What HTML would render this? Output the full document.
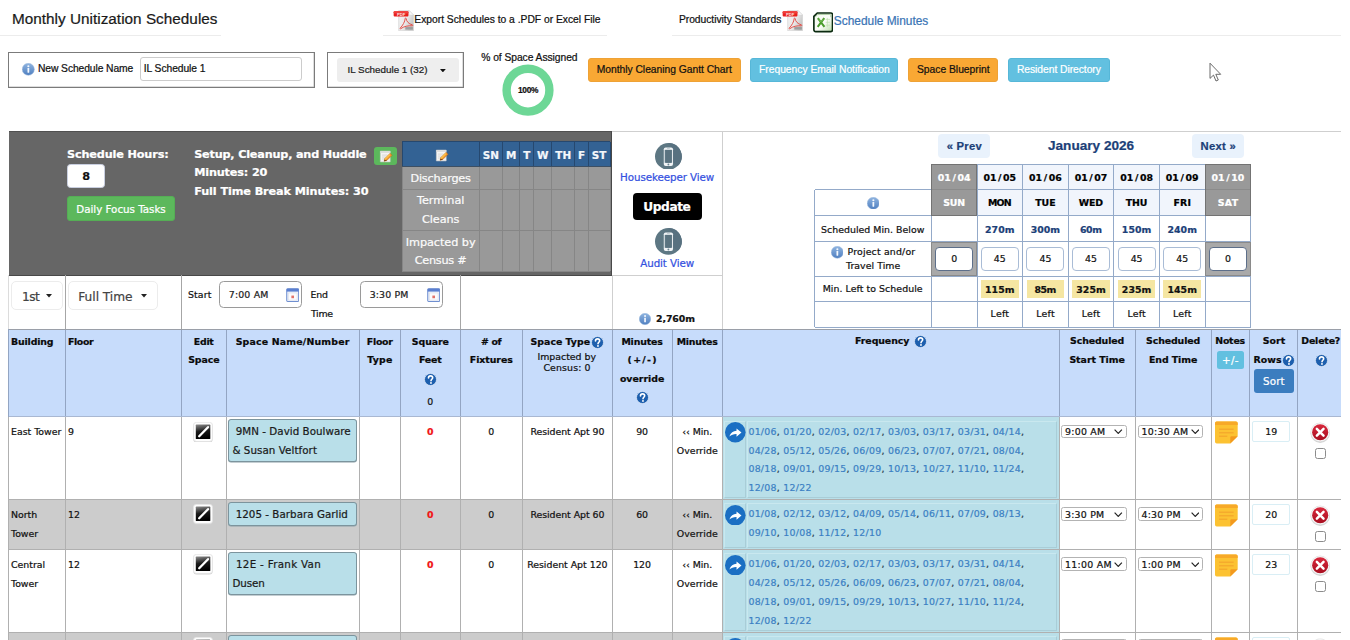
<!DOCTYPE html>
<html lang="en">
<head>
<meta charset="utf-8">
<title>Monthly Unitization Schedules</title>
<style>
html,body{margin:0;padding:0;background:#fff;}
body{width:1350px;height:640px;overflow:hidden;position:relative;font-family:"DejaVu Sans",sans-serif;color:#000;}
div,span.t,svg.a{position:absolute;box-sizing:border-box;}
span.t{white-space:pre;-webkit-text-stroke:0.22px currentColor;}
span.t b{font-weight:400;color:#3b7fc4;}
span.t i{font-style:normal;}
</style>
</head>
<body>
<div style="left:0px;top:35px;width:221px;height:1px;background:#ececec"></div>
<div style="left:383px;top:35px;width:223.5px;height:1px;background:#ececec"></div>
<div style="left:672px;top:35px;width:669px;height:1px;background:#ececec"></div>
<span class="t" style="left:12px;top:10.56px;font-size:15.3px;line-height:15.3px;font-family:'Liberation Sans', sans-serif;color:#1a1a1a;letter-spacing:0.02px;">Monthly Unitization Schedules</span>
<svg class="a" style="left:392.5px;top:10.3px" width="21.5" height="21.2" viewBox="0 0 21.5 21.5"><defs><linearGradient id="pg" x1="0" y1="0" x2="1" y2="0.600"><stop offset="0" stop-color="#f4f4f4"/><stop offset="0.600" stop-color="#e9e9e9"/><stop offset="1" stop-color="#c4c4c4"/></linearGradient></defs><path d="M5.600 0.400h10.400l4.700 4.700v15.900h-15.100z" fill="url(#pg)" stroke="#d0d0d0" stroke-width="0.600"/><path d="M16 0.400v4.700h4.700z" fill="#fafafa" stroke="#cfcfcf" stroke-width="0.400"/><rect x="12.300" y="17.300" width="7.700" height="2.600" fill="#9d9d9d"/><path d="M7.200 18.300C9.700 15.800 12 11.800 12.200 8.700c0-.800 1-.800 1 0C13.300 11.400 16 14.300 19.400 15c.800.200.700 1-.100 1C15.600 15.700 10.400 16.700 7.900 18.900c-.600.500-1.200 0-.700-.600z" fill="none" stroke="#e4514b" stroke-width="1" stroke-linejoin="round"/><rect x="0.500" y="1.300" width="15" height="5.300" rx="0.900" fill="#e8201c"/><rect x="0.500" y="1.300" width="15" height="2.200" rx="0.900" fill="#f0413c"/><text x="8" y="5.600" font-family="Liberation Sans, sans-serif" font-size="4.200" font-weight="700" fill="#fbe3e2" text-anchor="middle">PDF</text></svg>
<span class="t" style="left:414.3px;top:14.99px;font-size:10.3px;line-height:10.3px;font-family:'Liberation Sans', sans-serif;color:#111;letter-spacing:-0.01px;">Export Schedules to a .PDF or Excel File</span>
<span class="t" style="left:678.9px;top:15.39px;font-size:10.3px;line-height:10.3px;font-family:'Liberation Sans', sans-serif;color:#111;letter-spacing:-0.03px;">Productivity Standards</span>
<svg class="a" style="left:781.5px;top:10.3px" width="21.5" height="21.2" viewBox="0 0 21.5 21.5"><defs><linearGradient id="pg" x1="0" y1="0" x2="1" y2="0.600"><stop offset="0" stop-color="#f4f4f4"/><stop offset="0.600" stop-color="#e9e9e9"/><stop offset="1" stop-color="#c4c4c4"/></linearGradient></defs><path d="M5.600 0.400h10.400l4.700 4.700v15.900h-15.100z" fill="url(#pg)" stroke="#d0d0d0" stroke-width="0.600"/><path d="M16 0.400v4.700h4.700z" fill="#fafafa" stroke="#cfcfcf" stroke-width="0.400"/><rect x="12.300" y="17.300" width="7.700" height="2.600" fill="#9d9d9d"/><path d="M7.200 18.300C9.700 15.800 12 11.800 12.200 8.700c0-.800 1-.800 1 0C13.300 11.400 16 14.300 19.400 15c.800.200.700 1-.100 1C15.600 15.700 10.400 16.700 7.900 18.900c-.600.500-1.200 0-.700-.600z" fill="none" stroke="#e4514b" stroke-width="1" stroke-linejoin="round"/><rect x="0.500" y="1.300" width="15" height="5.300" rx="0.900" fill="#e8201c"/><rect x="0.500" y="1.300" width="15" height="2.200" rx="0.900" fill="#f0413c"/><text x="8" y="5.600" font-family="Liberation Sans, sans-serif" font-size="4.200" font-weight="700" fill="#fbe3e2" text-anchor="middle">PDF</text></svg>
<svg class="a" style="left:812.8px;top:12px" width="20.4" height="20.6" viewBox="0 0 21 21"><defs><linearGradient id="xg" x1="0" y1="0" x2="1" y2="1"><stop offset="0" stop-color="#f4faef"/><stop offset="0.550" stop-color="#fbfdf9"/><stop offset="1" stop-color="#b9dba8"/></linearGradient></defs><path d="M4.400 0.900h13.900a1.800 1.800 0 0 1 1.800 1.800v15.600a1.800 1.800 0 0 1-1.800 1.800h-15.600a1.800 1.800 0 0 1-1.800-1.800v-13.900z" fill="url(#xg)" stroke="#0b2a10" stroke-width="1.700" stroke-linejoin="round"/><path d="M2.400 4.900l2.500-2.500h12.500a.900.900 0 0 1 .900.900v2" fill="none" stroke="#5e9a4c" stroke-width="0.700" opacity="0.700"/><path d="M13 7.500h4.500M13 10.500h4.500M13 13.500h4.500M14.800 6v9.500" stroke="#bfe0b0" stroke-width="0.700"/><path d="M5 6.300l6.800 8.900M11.600 6.300L4.800 15.200" stroke="#4a9c2c" stroke-width="2.100" fill="none"/><path d="M5.600 6.700l2.900 3.800M11 6.700l-2.300 3" stroke="#7fc45a" stroke-width="0.800" fill="none"/></svg>
<span class="t" style="left:833.8px;top:15.63px;font-size:11.9px;line-height:11.9px;font-family:'Liberation Sans', sans-serif;color:#3a74b5;">Schedule Minutes</span>
<div style="left:8px;top:51.6px;width:307.3px;height:36px;border:1px solid #7b7b7b;box-shadow:inset -0.5px -0.5px 0 #bbb"></div>
<svg class="a" style="left:22px;top:63.4px" width="12.6" height="12.6" viewBox="0 0 20 20"><defs><linearGradient id="ig" x1="0" y1="0" x2="0" y2="1"><stop offset="0" stop-color="#8fb4e0"/><stop offset="1" stop-color="#4f7fc0"/></linearGradient></defs><circle cx="10" cy="10" r="9.6" fill="url(#ig)" stroke="#9db9dd" stroke-width="0.8"/><rect x="8.7" y="8" width="2.8" height="7.4" rx="0.6" fill="#f4f8fd"/><circle cx="10.1" cy="5.2" r="1.7" fill="#f4f8fd"/></svg>
<span class="t" style="left:38px;top:63.89px;font-size:10.3px;line-height:10.3px;font-family:'Liberation Sans', sans-serif;color:#111;letter-spacing:-0.09px;">New Schedule Name</span>
<div style="left:139.7px;top:57px;width:162.1px;height:24.3px;border:1px solid #ccc;border-radius:3px;background:#fff"></div>
<span class="t" style="left:143.8px;top:64.09px;font-size:10.3px;line-height:10.3px;font-family:'Liberation Sans', sans-serif;color:#111;letter-spacing:-0.08px;">IL Schedule 1</span>
<div style="left:327.3px;top:52.3px;width:136.5px;height:35.3px;border:1px solid #7b7b7b;box-shadow:inset -0.5px -0.5px 0 #bbb"></div>
<div style="left:337px;top:57.5px;width:122px;height:24.5px;background:#eeeeee;border-radius:3px"></div>
<span class="t" style="left:347.5px;top:64.97px;font-size:9.85px;line-height:9.85px;font-family:'Liberation Sans', sans-serif;color:#222;">IL Schedule 1 (32)</span>
<svg class="a" style="left:439.8px;top:68.8px" width="5.8" height="3.4" viewBox="0 0 8 4.6"><path d="M0 0h8L4 4.600z" fill="#111"/></svg>
<span class="t" style="left:481.3px;top:52.59px;font-size:10.3px;line-height:10.3px;font-family:'Liberation Sans', sans-serif;color:#111;letter-spacing:-0.06px;">% of Space Assigned</span>
<svg class="a" style="left:500px;top:62px" width="56" height="56" viewBox="0 0 56 56"><circle cx="28" cy="28.2" r="21.400" fill="none" stroke="#6dd796" stroke-width="8.400"/></svg>
<span class="t" style="left:517.95px;top:86.09px;font-size:8.4px;line-height:8.4px;font-family:'Liberation Sans', sans-serif;font-weight:700;color:#111;letter-spacing:-0.31px;">100%</span>
<div style="left:587.5px;top:58px;width:153.1px;height:24.2px;background:#f9a834;border:1px solid #eea236;border-radius:3px"></div>
<span class="t" style="left:596.7px;top:64.99px;font-size:10.3px;line-height:10.3px;font-family:'Liberation Sans', sans-serif;color:#111;letter-spacing:-0.02px;">Monthly Cleaning Gantt Chart</span>
<div style="left:750px;top:58px;width:148px;height:24.2px;background:#62c0e0;border:1px solid #56b7d8;border-radius:3px"></div>
<span class="t" style="left:759px;top:64.99px;font-size:10.3px;line-height:10.3px;font-family:'Liberation Sans', sans-serif;color:#fff;letter-spacing:-0.01px;">Frequency Email Notification</span>
<div style="left:908px;top:58px;width:89.5px;height:24.2px;background:#f9a834;border:1px solid #eea236;border-radius:3px"></div>
<span class="t" style="left:917px;top:64.99px;font-size:10.3px;line-height:10.3px;font-family:'Liberation Sans', sans-serif;color:#111;letter-spacing:-0.01px;">Space Blueprint</span>
<div style="left:1007.8px;top:57.6px;width:101.9px;height:24.8px;background:#62c0e0;border:1px solid #56b7d8;border-radius:3px"></div>
<span class="t" style="left:1016.9px;top:64.89px;font-size:10.3px;line-height:10.3px;font-family:'Liberation Sans', sans-serif;color:#fff;letter-spacing:-0.04px;">Resident Directory</span>
<svg class="a" style="left:1207.5px;top:61.6px" width="15" height="21" viewBox="0 0 15 21"><path d="M2 1.200v15.200l3.500-3.300 2.500 5.900 2.300-1-2.500-5.700h4.900z" fill="#fff" stroke="#5a5a5a" stroke-width="0.9" stroke-linejoin="round"/></svg>
<div style="left:8.7px;top:131.3px;width:603.3px;height:144.4px;background:#666;border-top:1.500px solid #505050;border-bottom:1.500px solid #484848;border-right:1.500px solid #484848"></div>
<span class="t" style="left:67px;top:149.18px;font-size:11.25px;line-height:11.25px;font-weight:700;color:#fff;letter-spacing:-0.15px;">Schedule Hours:</span>
<div style="left:67px;top:164.2px;width:38.3px;height:24.1px;background:#fff;border:1px solid #c9cfe0;border-radius:3.500px"></div>
<span class="t" style="left:82.19px;top:170.78px;font-size:11.25px;line-height:11.25px;font-weight:700;color:#111;">8</span>
<div style="left:67px;top:196.3px;width:108px;height:24.5px;background:#5cb85c;border:1px solid #55ae55;border-radius:3px"></div>
<span class="t" style="left:76.3px;top:203.59px;font-size:10.3px;line-height:10.3px;color:#fff;letter-spacing:-0.01px;">Daily Focus Tasks</span>
<span class="t" style="left:194.2px;top:149.18px;font-size:11.25px;line-height:11.25px;font-weight:700;color:#fff;letter-spacing:-0.2px;">Setup, Cleanup, and Huddle</span>
<span class="t" style="left:194.2px;top:167.48px;font-size:11.25px;line-height:11.25px;font-weight:700;color:#fff;letter-spacing:-0.16px;">Minutes: 20</span>
<span class="t" style="left:194.2px;top:185.78px;font-size:11.25px;line-height:11.25px;font-weight:700;color:#fff;letter-spacing:-0.11px;">Full Time Break Minutes: 30</span>
<div style="left:373.7px;top:146.7px;width:23.3px;height:18.3px;background:#5cb85c;border-radius:3px"></div>
<svg class="a" style="left:378.3px;top:148.6px" width="15" height="15" viewBox="0 0 16 16"><path d="M2.500 2.200h10.500v11.600h-10.500z" fill="#f4f4f4" stroke="#c9c9c9" stroke-width="0.6"/><path d="M2.500 2.200h10.500v2h-10.500z" fill="#dcdcdc"/><path d="M4.200 6.500h6M4.200 8.600h4.500M4.200 10.700h3" stroke="#cfcfcf" stroke-width="0.8"/><path d="M12.900 4.600l2.100 2.100-5.600 5.600-2.900.8.800-2.900z" fill="#f0932b" stroke="#b8651a" stroke-width="0.5"/><path d="M6.500 13.100l.8-2.900 2.100 2.100z" fill="#6b3410"/><path d="M12.200 5.300l1.100 1.100-5.600 5.600-1.100-1.100z" fill="#fbc04a"/></svg>
<div style="left:402.2px;top:141.7px;width:207.8px;height:25px;background:#336294"></div>
<div style="left:402.2px;top:166.7px;width:207.8px;height:104.7px;background:#999"></div>
<div style="left:401.7px;top:141.7px;width:1px;height:25px;background:#26486f"></div>
<div style="left:401.7px;top:166.7px;width:1px;height:104.7px;background:#868686"></div>
<div style="left:478.7px;top:141.7px;width:1px;height:25px;background:#26486f"></div>
<div style="left:478.7px;top:166.7px;width:1px;height:104.7px;background:#868686"></div>
<div style="left:502px;top:141.7px;width:1px;height:25px;background:#26486f"></div>
<div style="left:502px;top:166.7px;width:1px;height:104.7px;background:#868686"></div>
<div style="left:519.2px;top:141.7px;width:1px;height:25px;background:#26486f"></div>
<div style="left:519.2px;top:166.7px;width:1px;height:104.7px;background:#868686"></div>
<div style="left:533.2px;top:141.7px;width:1px;height:25px;background:#26486f"></div>
<div style="left:533.2px;top:166.7px;width:1px;height:104.7px;background:#868686"></div>
<div style="left:551.2px;top:141.7px;width:1px;height:25px;background:#26486f"></div>
<div style="left:551.2px;top:166.7px;width:1px;height:104.7px;background:#868686"></div>
<div style="left:574.2px;top:141.7px;width:1px;height:25px;background:#26486f"></div>
<div style="left:574.2px;top:166.7px;width:1px;height:104.7px;background:#868686"></div>
<div style="left:587.8px;top:141.7px;width:1px;height:25px;background:#26486f"></div>
<div style="left:587.8px;top:166.7px;width:1px;height:104.7px;background:#868686"></div>
<div style="left:609.5px;top:141.7px;width:1px;height:25px;background:#26486f"></div>
<div style="left:609.5px;top:166.7px;width:1px;height:104.7px;background:#868686"></div>
<div style="left:402.2px;top:141.2px;width:207.8px;height:1px;background:#26486f"></div>
<div style="left:402.2px;top:166.2px;width:207.8px;height:1px;background:#3d4f63"></div>
<div style="left:402.2px;top:189.2px;width:207.8px;height:1px;background:#868686"></div>
<div style="left:402.2px;top:229.5px;width:207.8px;height:1px;background:#868686"></div>
<div style="left:402.2px;top:270.9px;width:207.8px;height:1px;background:#868686"></div>
<svg class="a" style="left:433.5px;top:148px" width="15" height="15" viewBox="0 0 16 16"><path d="M2.500 2.200h10.500v11.600h-10.500z" fill="#f4f4f4" stroke="#c9c9c9" stroke-width="0.6"/><path d="M2.500 2.200h10.500v2h-10.500z" fill="#dcdcdc"/><path d="M4.200 6.500h6M4.200 8.600h4.500M4.200 10.700h3" stroke="#cfcfcf" stroke-width="0.8"/><path d="M12.900 4.600l2.100 2.100-5.600 5.600-2.900.8.800-2.900z" fill="#f0932b" stroke="#b8651a" stroke-width="0.5"/><path d="M6.500 13.100l.8-2.900 2.100 2.100z" fill="#6b3410"/><path d="M12.200 5.300l1.100 1.100-5.600 5.600-1.100-1.100z" fill="#fbc04a"/></svg>
<span class="t" style="left:482.76px;top:150.2px;font-size:10.4px;line-height:10.4px;font-weight:700;color:#f4f7fb;">SN</span>
<span class="t" style="left:505.93px;top:150.2px;font-size:10.4px;line-height:10.4px;font-weight:700;color:#f4f7fb;">M</span>
<span class="t" style="left:523.15px;top:150.2px;font-size:10.4px;line-height:10.4px;font-weight:700;color:#f4f7fb;">T</span>
<span class="t" style="left:536.97px;top:150.2px;font-size:10.4px;line-height:10.4px;font-weight:700;color:#f4f7fb;">W</span>
<span class="t" style="left:555.3px;top:150.2px;font-size:10.4px;line-height:10.4px;font-weight:700;color:#f4f7fb;">TH</span>
<span class="t" style="left:577.95px;top:150.2px;font-size:10.4px;line-height:10.4px;font-weight:700;color:#f4f7fb;">F</span>
<span class="t" style="left:591.86px;top:150.2px;font-size:10.4px;line-height:10.4px;font-weight:700;color:#f4f7fb;">ST</span>
<span class="t" style="left:410.45px;top:173.28px;font-size:11.25px;line-height:11.25px;color:#fbfbfb;letter-spacing:-0.19px;">Discharges</span>
<span class="t" style="left:416.95px;top:195.48px;font-size:11.25px;line-height:11.25px;color:#fbfbfb;letter-spacing:-0.01px;">Terminal</span>
<span class="t" style="left:422.05px;top:214.18px;font-size:11.25px;line-height:11.25px;color:#fbfbfb;letter-spacing:-0.1px;">Cleans</span>
<span class="t" style="left:405.7px;top:236.68px;font-size:11.25px;line-height:11.25px;color:#fbfbfb;letter-spacing:-0.04px;">Impacted by</span>
<span class="t" style="left:414.7px;top:255.48px;font-size:11.25px;line-height:11.25px;color:#fbfbfb;letter-spacing:-0.25px;">Census #</span>
<div style="left:611.5px;top:131px;width:729.5px;height:1px;background:#cfcfcf"></div>
<div style="left:721.8px;top:131px;width:1px;height:198px;background:#cfcfcf"></div>
<div style="left:611.5px;top:275.2px;width:111.3px;height:1px;background:#cfcfcf"></div>
<div style="left:611.5px;top:275.2px;width:1px;height:53.8px;background:#cfcfcf"></div>
<svg class="a" style="left:654.9px;top:142.7px" width="26.8" height="26.8" viewBox="0 0 40 40"><circle cx="20" cy="20" r="20" fill="#5d7783"/><path d="M20 0a20 20 0 0 1 14.100 34.100L26 28V8z" fill="#587180"/><rect x="13.100" y="6.700" width="13.800" height="27.600" rx="2.800" fill="#f1f4f6"/><rect x="14.500" y="10.300" width="11" height="19.200" fill="#657f8b"/><rect x="15.600" y="10.300" width="8.800" height="19.200" fill="#5a7380"/><circle cx="20" cy="32" r="1.400" fill="#6b8591"/><rect x="17.800" y="8.100" width="4.400" height="0.900" rx="0.400" fill="#9fb2bb"/></svg>
<span class="t" style="left:620.1px;top:171.79px;font-size:10.3px;line-height:10.3px;color:#3350e0;letter-spacing:-0.08px;">Housekeeper View</span>
<div style="left:633px;top:192.5px;width:68.7px;height:27.5px;background:#000;border-radius:4px"></div>
<span class="t" style="left:643.35px;top:201.08px;font-size:12.2px;line-height:12.2px;font-weight:700;color:#fff;letter-spacing:-0.43px;">Update</span>
<svg class="a" style="left:655.3px;top:228.1px" width="26.8" height="26.8" viewBox="0 0 40 40"><circle cx="20" cy="20" r="20" fill="#5d7783"/><path d="M20 0a20 20 0 0 1 14.100 34.100L26 28V8z" fill="#587180"/><rect x="13.100" y="6.700" width="13.800" height="27.600" rx="2.800" fill="#f1f4f6"/><rect x="14.500" y="10.300" width="11" height="19.200" fill="#657f8b"/><rect x="15.600" y="10.300" width="8.800" height="19.200" fill="#5a7380"/><circle cx="20" cy="32" r="1.400" fill="#6b8591"/><rect x="17.800" y="8.100" width="4.400" height="0.900" rx="0.400" fill="#9fb2bb"/></svg>
<span class="t" style="left:640.35px;top:257.89px;font-size:10.3px;line-height:10.3px;color:#3350e0;letter-spacing:-0.11px;">Audit View</span>
<svg class="a" style="left:639.3px;top:313px" width="12" height="12" viewBox="0 0 20 20"><defs><linearGradient id="ig" x1="0" y1="0" x2="0" y2="1"><stop offset="0" stop-color="#8fb4e0"/><stop offset="1" stop-color="#4f7fc0"/></linearGradient></defs><circle cx="10" cy="10" r="9.6" fill="url(#ig)" stroke="#9db9dd" stroke-width="0.8"/><rect x="8.7" y="8" width="2.8" height="7.4" rx="0.6" fill="#f4f8fd"/><circle cx="10.1" cy="5.2" r="1.7" fill="#f4f8fd"/></svg>
<span class="t" style="left:656px;top:314.05px;font-size:9.4px;line-height:9.4px;font-weight:700;color:#111;letter-spacing:-0.09px;">2,760m</span>
<div style="left:938px;top:134.2px;width:52px;height:23.8px;background:#e9f2fc;border-radius:4px"></div>
<span class="t" style="left:946.7px;top:140.98px;font-size:11.25px;line-height:11.25px;font-family:'Liberation Sans', sans-serif;font-weight:700;color:#1c3f78;letter-spacing:0.24px;">« Prev</span>
<span class="t" style="left:1048px;top:139.19px;font-size:13.6px;line-height:13.6px;font-family:'Liberation Sans', sans-serif;font-weight:700;color:#1c3f78;">January 2026</span>
<div style="left:1192px;top:134.2px;width:51.7px;height:23.8px;background:#e9f2fc;border-radius:4px"></div>
<span class="t" style="left:1200.55px;top:140.98px;font-size:11.25px;line-height:11.25px;font-family:'Liberation Sans', sans-serif;font-weight:700;color:#1c3f78;letter-spacing:0.3px;">Next »</span>
<div style="left:931.3px;top:164.2px;width:45.7px;height:51.2px;background:#999"></div>
<div style="left:931.3px;top:241.8px;width:45.7px;height:34.2px;background:#a9a9a9"></div>
<div style="left:977px;top:164.2px;width:45.6px;height:51.2px;background:#f1f5fc"></div>
<div style="left:1022.6px;top:164.2px;width:45.6px;height:51.2px;background:#f1f5fc"></div>
<div style="left:1068.2px;top:164.2px;width:45.6px;height:51.2px;background:#f1f5fc"></div>
<div style="left:1113.8px;top:164.2px;width:45.6px;height:51.2px;background:#f1f5fc"></div>
<div style="left:1159.4px;top:164.2px;width:45.6px;height:51.2px;background:#f1f5fc"></div>
<div style="left:1205px;top:164.2px;width:45.8px;height:51.2px;background:#999"></div>
<div style="left:1205px;top:241.8px;width:45.8px;height:34.2px;background:#a9a9a9"></div>
<div style="left:931.3px;top:163.7px;width:320px;height:1px;background:#94aac9"></div>
<div style="left:814.7px;top:189.2px;width:436.6px;height:1px;background:#94aac9"></div>
<div style="left:814.7px;top:214.9px;width:436.6px;height:1px;background:#94aac9"></div>
<div style="left:814.7px;top:241.3px;width:436.6px;height:1px;background:#94aac9"></div>
<div style="left:814.7px;top:275.5px;width:436.6px;height:1px;background:#94aac9"></div>
<div style="left:814.7px;top:300.9px;width:436.6px;height:1px;background:#94aac9"></div>
<div style="left:814.7px;top:326.9px;width:436.6px;height:1px;background:#94aac9"></div>
<div style="left:814.2px;top:189.7px;width:1px;height:137.7px;background:#94aac9"></div>
<div style="left:930.8px;top:164.2px;width:1px;height:163.2px;background:#94aac9"></div>
<div style="left:976.5px;top:164.2px;width:1px;height:163.2px;background:#94aac9"></div>
<div style="left:1022.1px;top:164.2px;width:1px;height:163.2px;background:#94aac9"></div>
<div style="left:1067.7px;top:164.2px;width:1px;height:163.2px;background:#94aac9"></div>
<div style="left:1113.3px;top:164.2px;width:1px;height:163.2px;background:#94aac9"></div>
<div style="left:1158.9px;top:164.2px;width:1px;height:163.2px;background:#94aac9"></div>
<div style="left:1204.5px;top:164.2px;width:1px;height:163.2px;background:#94aac9"></div>
<div style="left:1250.3px;top:164.2px;width:1px;height:163.2px;background:#94aac9"></div>
<div style="left:931.3px;top:164.2px;width:46.2px;height:51.7px;border:1px solid #737373;background:#999"></div>
<div style="left:932.3px;top:189.2px;width:44.2px;height:1px;background:#8b8b8b"></div>
<div style="left:931.3px;top:241.8px;width:46.2px;height:34.7px;border:1px solid #8a8a8a"></div>
<div style="left:1205px;top:164.2px;width:46.3px;height:51.7px;border:1px solid #737373;background:#999"></div>
<div style="left:1206px;top:189.2px;width:44.3px;height:1px;background:#8b8b8b"></div>
<div style="left:1205px;top:241.8px;width:46.3px;height:34.7px;border:1px solid #8a8a8a"></div>
<span class="t" style="left:939.38px;top:172.55px;font-size:9.4px;line-height:9.4px;font-weight:700;color:#fff;margin-left:-1.600px;">01<i style="padding:0 1.600px">/</i>04</span>
<span class="t" style="left:943.3px;top:198.25px;font-size:9.4px;line-height:9.4px;font-weight:700;color:#fff;letter-spacing:-0.26px;">SUN</span>
<div style="left:935.15px;top:246.6px;width:38px;height:24px;background:#fff;border:1px solid #5d6f8a;border-radius:4px"></div>
<span class="t" style="left:951.17px;top:254.35px;font-size:9.4px;line-height:9.4px;color:#111;">0</span>
<span class="t" style="left:985.03px;top:172.55px;font-size:9.4px;line-height:9.4px;font-weight:700;margin-left:-1.600px;">01<i style="padding:0 1.600px">/</i>05</span>
<span class="t" style="left:987.9px;top:198.25px;font-size:9.4px;line-height:9.4px;font-weight:700;letter-spacing:-0.68px;">MON</span>
<span class="t" style="left:985.05px;top:224.75px;font-size:9.4px;line-height:9.4px;font-weight:700;color:#1c3f78;letter-spacing:0.05px;">270m</span>
<div style="left:980.8px;top:246.6px;width:38px;height:24px;background:#fff;border:1px solid #a9bcd6;border-radius:4px"></div>
<span class="t" style="left:993.83px;top:254.35px;font-size:9.4px;line-height:9.4px;color:#111;">45</span>
<div style="left:980.9px;top:280px;width:37.8px;height:17.5px;background:#f5e6a2"></div>
<span class="t" style="left:985.05px;top:284.75px;font-size:9.4px;line-height:9.4px;font-weight:700;color:#111;letter-spacing:0.05px;">115m</span>
<span class="t" style="left:990.6px;top:309.45px;font-size:9.4px;line-height:9.4px;color:#111;letter-spacing:0.25px;">Left</span>
<span class="t" style="left:1030.63px;top:172.55px;font-size:9.4px;line-height:9.4px;font-weight:700;margin-left:-1.600px;">01<i style="padding:0 1.600px">/</i>06</span>
<span class="t" style="left:1035.15px;top:198.25px;font-size:9.4px;line-height:9.4px;font-weight:700;letter-spacing:0.04px;">TUE</span>
<span class="t" style="left:1030.65px;top:224.75px;font-size:9.4px;line-height:9.4px;font-weight:700;color:#1c3f78;letter-spacing:0.05px;">300m</span>
<div style="left:1026.4px;top:246.6px;width:38px;height:24px;background:#fff;border:1px solid #a9bcd6;border-radius:4px"></div>
<span class="t" style="left:1039.43px;top:254.35px;font-size:9.4px;line-height:9.4px;color:#111;">45</span>
<div style="left:1026.5px;top:280px;width:37.8px;height:17.5px;background:#f5e6a2"></div>
<span class="t" style="left:1034.4px;top:284.75px;font-size:9.4px;line-height:9.4px;font-weight:700;color:#111;letter-spacing:-0.41px;">85m</span>
<span class="t" style="left:1036.2px;top:309.45px;font-size:9.4px;line-height:9.4px;color:#111;letter-spacing:0.25px;">Left</span>
<span class="t" style="left:1076.23px;top:172.55px;font-size:9.4px;line-height:9.4px;font-weight:700;margin-left:-1.600px;">01<i style="padding:0 1.600px">/</i>07</span>
<span class="t" style="left:1078.85px;top:198.25px;font-size:9.4px;line-height:9.4px;font-weight:700;letter-spacing:-0.12px;">WED</span>
<span class="t" style="left:1080px;top:224.75px;font-size:9.4px;line-height:9.4px;font-weight:700;color:#1c3f78;letter-spacing:-0.41px;">60m</span>
<div style="left:1072px;top:246.6px;width:38px;height:24px;background:#fff;border:1px solid #a9bcd6;border-radius:4px"></div>
<span class="t" style="left:1085.03px;top:254.35px;font-size:9.4px;line-height:9.4px;color:#111;">45</span>
<div style="left:1072.1px;top:280px;width:37.8px;height:17.5px;background:#f5e6a2"></div>
<span class="t" style="left:1076.25px;top:284.75px;font-size:9.4px;line-height:9.4px;font-weight:700;color:#111;letter-spacing:0.05px;">325m</span>
<span class="t" style="left:1081.8px;top:309.45px;font-size:9.4px;line-height:9.4px;color:#111;letter-spacing:0.25px;">Left</span>
<span class="t" style="left:1121.83px;top:172.55px;font-size:9.4px;line-height:9.4px;font-weight:700;margin-left:-1.600px;">01<i style="padding:0 1.600px">/</i>08</span>
<span class="t" style="left:1125.7px;top:198.25px;font-size:9.4px;line-height:9.4px;font-weight:700;letter-spacing:-0.03px;">THU</span>
<span class="t" style="left:1121.85px;top:224.75px;font-size:9.4px;line-height:9.4px;font-weight:700;color:#1c3f78;letter-spacing:0.05px;">150m</span>
<div style="left:1117.6px;top:246.6px;width:38px;height:24px;background:#fff;border:1px solid #a9bcd6;border-radius:4px"></div>
<span class="t" style="left:1130.63px;top:254.35px;font-size:9.4px;line-height:9.4px;color:#111;">45</span>
<div style="left:1117.7px;top:280px;width:37.8px;height:17.5px;background:#f5e6a2"></div>
<span class="t" style="left:1121.85px;top:284.75px;font-size:9.4px;line-height:9.4px;font-weight:700;color:#111;letter-spacing:0.05px;">235m</span>
<span class="t" style="left:1127.4px;top:309.45px;font-size:9.4px;line-height:9.4px;color:#111;letter-spacing:0.25px;">Left</span>
<span class="t" style="left:1167.43px;top:172.55px;font-size:9.4px;line-height:9.4px;font-weight:700;margin-left:-1.600px;">01<i style="padding:0 1.600px">/</i>09</span>
<span class="t" style="left:1173.45px;top:198.25px;font-size:9.4px;line-height:9.4px;font-weight:700;letter-spacing:0.19px;">FRI</span>
<span class="t" style="left:1167.45px;top:224.75px;font-size:9.4px;line-height:9.4px;font-weight:700;color:#1c3f78;letter-spacing:0.05px;">240m</span>
<div style="left:1163.2px;top:246.6px;width:38px;height:24px;background:#fff;border:1px solid #a9bcd6;border-radius:4px"></div>
<span class="t" style="left:1176.23px;top:254.35px;font-size:9.4px;line-height:9.4px;color:#111;">45</span>
<div style="left:1163.3px;top:280px;width:37.8px;height:17.5px;background:#f5e6a2"></div>
<span class="t" style="left:1167.45px;top:284.75px;font-size:9.4px;line-height:9.4px;font-weight:700;color:#111;letter-spacing:0.05px;">145m</span>
<span class="t" style="left:1173px;top:309.45px;font-size:9.4px;line-height:9.4px;color:#111;letter-spacing:0.25px;">Left</span>
<span class="t" style="left:1213.13px;top:172.55px;font-size:9.4px;line-height:9.4px;font-weight:700;color:#fff;margin-left:-1.600px;">01<i style="padding:0 1.600px">/</i>10</span>
<span class="t" style="left:1217.75px;top:198.25px;font-size:9.4px;line-height:9.4px;font-weight:700;color:#fff;letter-spacing:0.31px;">SAT</span>
<div style="left:1208.9px;top:246.6px;width:38px;height:24px;background:#fff;border:1px solid #5d6f8a;border-radius:4px"></div>
<span class="t" style="left:1224.92px;top:254.35px;font-size:9.4px;line-height:9.4px;color:#111;">0</span>
<svg class="a" style="left:866.6px;top:196.5px" width="12.6" height="12.6" viewBox="0 0 20 20"><defs><linearGradient id="ig" x1="0" y1="0" x2="0" y2="1"><stop offset="0" stop-color="#8fb4e0"/><stop offset="1" stop-color="#4f7fc0"/></linearGradient></defs><circle cx="10" cy="10" r="9.6" fill="url(#ig)" stroke="#9db9dd" stroke-width="0.8"/><rect x="8.7" y="8" width="2.8" height="7.4" rx="0.6" fill="#f4f8fd"/><circle cx="10.1" cy="5.2" r="1.7" fill="#f4f8fd"/></svg>
<span class="t" style="left:821px;top:224.55px;font-size:9.4px;line-height:9.4px;color:#111;letter-spacing:0.03px;">Scheduled Min. Below</span>
<svg class="a" style="left:830.5px;top:246px" width="12.6" height="12.6" viewBox="0 0 20 20"><defs><linearGradient id="ig" x1="0" y1="0" x2="0" y2="1"><stop offset="0" stop-color="#8fb4e0"/><stop offset="1" stop-color="#4f7fc0"/></linearGradient></defs><circle cx="10" cy="10" r="9.6" fill="url(#ig)" stroke="#9db9dd" stroke-width="0.8"/><rect x="8.7" y="8" width="2.8" height="7.4" rx="0.6" fill="#f4f8fd"/><circle cx="10.1" cy="5.2" r="1.7" fill="#f4f8fd"/></svg>
<span class="t" style="left:847.5px;top:247.35px;font-size:9.4px;line-height:9.4px;color:#111;letter-spacing:0.17px;">Project and/or</span>
<span class="t" style="left:846px;top:260.65px;font-size:9.4px;line-height:9.4px;color:#111;letter-spacing:0.05px;">Travel Time</span>
<span class="t" style="left:822.7px;top:284.35px;font-size:9.4px;line-height:9.4px;color:#111;letter-spacing:0.06px;">Min. Left to Schedule</span>
<div style="left:8.2px;top:275px;width:1px;height:54.3px;background:#dcdcdc"></div>
<div style="left:64.7px;top:275px;width:1px;height:54.3px;background:#a6a6a6"></div>
<div style="left:181.2px;top:275px;width:1px;height:54.3px;background:#a6a6a6"></div>
<div style="left:459.5px;top:275px;width:1px;height:54.3px;background:#a6a6a6"></div>
<div style="left:11.3px;top:281.3px;width:51.7px;height:28.7px;border:1px solid #ececec;border-radius:5px;background:#fff"></div>
<span class="t" style="left:22px;top:290.68px;font-size:12.2px;line-height:12.2px;color:#444;letter-spacing:-0.6px;">1st</span>
<svg class="a" style="left:46.2px;top:294.3px" width="6" height="3.5" viewBox="0 0 6 3.500"><path d="M0 0h6L3 3.500z" fill="#222"/></svg>
<div style="left:67.5px;top:281.3px;width:90.8px;height:28.7px;border:1px solid #ececec;border-radius:5px;background:#fff"></div>
<span class="t" style="left:78.3px;top:290.68px;font-size:12.2px;line-height:12.2px;color:#444;letter-spacing:-0.04px;">Full Time</span>
<svg class="a" style="left:141.2px;top:294.3px" width="6" height="3.5" viewBox="0 0 6 3.500"><path d="M0 0h6L3 3.500z" fill="#222"/></svg>
<span class="t" style="left:188px;top:290.35px;font-size:9.4px;line-height:9.4px;color:#111;letter-spacing:0.1px;">Start</span>
<div style="left:219.2px;top:281.3px;width:82.8px;height:26.7px;border:1px solid #9a9a9a;border-radius:4.500px;background:#fff"></div>
<span class="t" style="left:228.8px;top:290.05px;font-size:9.4px;line-height:9.4px;color:#222;letter-spacing:0.16px;">7:00 AM</span>
<svg class="a" style="left:286px;top:288px" width="13.4" height="14.2" viewBox="0 0 14 15"><rect x="0.700" y="0.700" width="12.600" height="13.600" rx="1.200" fill="#eef2fa" stroke="#6f8fd0" stroke-width="1.100"/><rect x="0.700" y="0.700" width="12.600" height="3.100" fill="#5b7fd0"/><rect x="2.400" y="5.300" width="9.200" height="7.400" fill="#fbfbfd" stroke="#d4d9e6" stroke-width="0.500"/><rect x="5.600" y="8" width="2.800" height="2.800" fill="#e2736a"/></svg>
<span class="t" style="left:310.5px;top:290.35px;font-size:9.4px;line-height:9.4px;color:#111;letter-spacing:-0.16px;">End</span>
<span class="t" style="left:311px;top:309.05px;font-size:9.4px;line-height:9.4px;color:#111;letter-spacing:-0.32px;">Time</span>
<div style="left:360.3px;top:281.3px;width:82.5px;height:26.7px;border:1px solid #9a9a9a;border-radius:4.500px;background:#fff"></div>
<span class="t" style="left:369.7px;top:290.05px;font-size:9.4px;line-height:9.4px;color:#222;letter-spacing:0.14px;">3:30 PM</span>
<svg class="a" style="left:426.7px;top:288px" width="13.4" height="14.2" viewBox="0 0 14 15"><rect x="0.700" y="0.700" width="12.600" height="13.600" rx="1.200" fill="#eef2fa" stroke="#6f8fd0" stroke-width="1.100"/><rect x="0.700" y="0.700" width="12.600" height="3.100" fill="#5b7fd0"/><rect x="2.400" y="5.300" width="9.200" height="7.400" fill="#fbfbfd" stroke="#d4d9e6" stroke-width="0.500"/><rect x="5.600" y="8" width="2.800" height="2.800" fill="#e2736a"/></svg>
<div style="left:8.7px;top:329.3px;width:1332.1px;height:87.5px;background:#c7dcfb"></div>
<div style="left:8.2px;top:329.3px;width:1px;height:87.5px;background:#93a5c3"></div>
<div style="left:64.7px;top:329.3px;width:1px;height:87.5px;background:#93a5c3"></div>
<div style="left:181.2px;top:329.3px;width:1px;height:87.5px;background:#93a5c3"></div>
<div style="left:225.5px;top:329.3px;width:1px;height:87.5px;background:#93a5c3"></div>
<div style="left:358.5px;top:329.3px;width:1px;height:87.5px;background:#93a5c3"></div>
<div style="left:400.2px;top:329.3px;width:1px;height:87.5px;background:#93a5c3"></div>
<div style="left:459.5px;top:329.3px;width:1px;height:87.5px;background:#93a5c3"></div>
<div style="left:522.1px;top:329.3px;width:1px;height:87.5px;background:#93a5c3"></div>
<div style="left:611.7px;top:329.3px;width:1px;height:87.5px;background:#93a5c3"></div>
<div style="left:671.5px;top:329.3px;width:1px;height:87.5px;background:#93a5c3"></div>
<div style="left:722px;top:329.3px;width:1px;height:87.5px;background:#93a5c3"></div>
<div style="left:1058.5px;top:329.3px;width:1px;height:87.5px;background:#93a5c3"></div>
<div style="left:1134.8px;top:329.3px;width:1px;height:87.5px;background:#93a5c3"></div>
<div style="left:1210.5px;top:329.3px;width:1px;height:87.5px;background:#93a5c3"></div>
<div style="left:1248.9px;top:329.3px;width:1px;height:87.5px;background:#93a5c3"></div>
<div style="left:1297.1px;top:329.3px;width:1px;height:87.5px;background:#93a5c3"></div>
<div style="left:8.7px;top:328.8px;width:1332.1px;height:1px;background:#9a9fa8"></div>
<span class="t" style="left:11px;top:336.65px;font-size:9.4px;line-height:9.4px;font-weight:700;color:#0a0a0a;letter-spacing:-0.14px;">Building</span>
<span class="t" style="left:68px;top:336.65px;font-size:9.4px;line-height:9.4px;font-weight:700;color:#0a0a0a;letter-spacing:-0.38px;">Floor</span>
<span class="t" style="left:193.85px;top:336.65px;font-size:9.4px;line-height:9.4px;font-weight:700;color:#0a0a0a;letter-spacing:-0.27px;">Edit</span>
<span class="t" style="left:188.15px;top:355.15px;font-size:9.4px;line-height:9.4px;font-weight:700;color:#0a0a0a;letter-spacing:-0.08px;">Space</span>
<span class="t" style="left:235.65px;top:336.65px;font-size:9.4px;line-height:9.4px;font-weight:700;color:#0a0a0a;letter-spacing:0.19px;">Space Name/Number</span>
<span class="t" style="left:366.7px;top:336.65px;font-size:9.4px;line-height:9.4px;font-weight:700;color:#0a0a0a;letter-spacing:-0.21px;">Floor</span>
<span class="t" style="left:367.35px;top:355.15px;font-size:9.4px;line-height:9.4px;font-weight:700;color:#0a0a0a;letter-spacing:0.18px;">Type</span>
<span class="t" style="left:411.85px;top:336.65px;font-size:9.4px;line-height:9.4px;font-weight:700;color:#0a0a0a;letter-spacing:-0.09px;">Square</span>
<span class="t" style="left:419.05px;top:355.15px;font-size:9.4px;line-height:9.4px;font-weight:700;color:#0a0a0a;letter-spacing:-0.21px;">Feet</span>
<svg class="a" style="left:424.1px;top:372.5px" width="13" height="13" viewBox="0 0 20 20"><circle cx="10" cy="10" r="9.3" fill="#1d5fae" stroke="#dfe9f8" stroke-width="1.2"/><path d="M6.9 7.6c0-1.9 1.4-3.1 3.2-3.1s3.2 1.1 3.2 2.8c0 2.3-2.5 2.4-2.5 4.6" fill="none" stroke="#fff" stroke-width="2.5" stroke-linecap="round"/><circle cx="10.7" cy="15.2" r="1.5" fill="#fff"/></svg>
<span class="t" style="left:427.37px;top:396.65px;font-size:9.4px;line-height:9.4px;color:#111;">0</span>
<span class="t" style="left:481px;top:336.65px;font-size:9.4px;line-height:9.4px;font-weight:700;color:#0a0a0a;letter-spacing:-0.35px;"># of</span>
<span class="t" style="left:469.8px;top:355.15px;font-size:9.4px;line-height:9.4px;font-weight:700;color:#0a0a0a;letter-spacing:-0.06px;">Fixtures</span>
<span class="t" style="left:530.6px;top:336.65px;font-size:9.4px;line-height:9.4px;font-weight:700;color:#0a0a0a;">Space Type</span>
<svg class="a" style="left:590.5px;top:335.5px" width="13" height="13" viewBox="0 0 20 20"><circle cx="10" cy="10" r="9.3" fill="#1d5fae" stroke="#dfe9f8" stroke-width="1.2"/><path d="M6.9 7.6c0-1.9 1.4-3.1 3.2-3.1s3.2 1.1 3.2 2.8c0 2.3-2.5 2.4-2.5 4.6" fill="none" stroke="#fff" stroke-width="2.5" stroke-linecap="round"/><circle cx="10.7" cy="15.2" r="1.5" fill="#fff"/></svg>
<span class="t" style="left:537.4px;top:352.05px;font-size:9.4px;line-height:9.4px;color:#111;">Impacted by</span>
<span class="t" style="left:543.4px;top:362.65px;font-size:9.4px;line-height:9.4px;color:#111;letter-spacing:0.14px;">Census: 0</span>
<span class="t" style="left:621.4px;top:336.65px;font-size:9.4px;line-height:9.4px;font-weight:700;color:#0a0a0a;letter-spacing:-0.15px;">Minutes</span>
<span class="t" style="left:627.6px;top:355.15px;font-size:9.4px;line-height:9.4px;font-weight:700;color:#0a0a0a;letter-spacing:1.31px;">(+/-)</span>
<span class="t" style="left:619.9px;top:373.65px;font-size:9.4px;line-height:9.4px;font-weight:700;color:#0a0a0a;letter-spacing:-0.01px;">override</span>
<svg class="a" style="left:635.5px;top:390.9px" width="13" height="13" viewBox="0 0 20 20"><circle cx="10" cy="10" r="9.3" fill="#1d5fae" stroke="#dfe9f8" stroke-width="1.2"/><path d="M6.9 7.6c0-1.9 1.4-3.1 3.2-3.1s3.2 1.1 3.2 2.8c0 2.3-2.5 2.4-2.5 4.6" fill="none" stroke="#fff" stroke-width="2.5" stroke-linecap="round"/><circle cx="10.7" cy="15.2" r="1.5" fill="#fff"/></svg>
<span class="t" style="left:676.75px;top:336.65px;font-size:9.4px;line-height:9.4px;font-weight:700;color:#0a0a0a;letter-spacing:-0.22px;">Minutes</span>
<span class="t" style="left:855.1px;top:336.35px;font-size:9.4px;line-height:9.4px;font-weight:700;color:#0a0a0a;letter-spacing:-0.08px;">Frequency</span>
<svg class="a" style="left:913.5px;top:335.2px" width="13" height="13" viewBox="0 0 20 20"><circle cx="10" cy="10" r="9.3" fill="#1d5fae" stroke="#dfe9f8" stroke-width="1.2"/><path d="M6.9 7.6c0-1.9 1.4-3.1 3.2-3.1s3.2 1.1 3.2 2.8c0 2.3-2.5 2.4-2.5 4.6" fill="none" stroke="#fff" stroke-width="2.5" stroke-linecap="round"/><circle cx="10.7" cy="15.2" r="1.5" fill="#fff"/></svg>
<span class="t" style="left:1070.05px;top:336.35px;font-size:9.4px;line-height:9.4px;font-weight:700;color:#0a0a0a;letter-spacing:-0.1px;">Scheduled</span>
<span class="t" style="left:1069.4px;top:354.85px;font-size:9.4px;line-height:9.4px;font-weight:700;color:#0a0a0a;letter-spacing:-0.02px;">Start Time</span>
<span class="t" style="left:1146.05px;top:336.35px;font-size:9.4px;line-height:9.4px;font-weight:700;color:#0a0a0a;letter-spacing:-0.1px;">Scheduled</span>
<span class="t" style="left:1149px;top:354.85px;font-size:9.4px;line-height:9.4px;font-weight:700;color:#0a0a0a;letter-spacing:-0.07px;">End Time</span>
<span class="t" style="left:1215.3px;top:336.35px;font-size:9.4px;line-height:9.4px;font-weight:700;color:#0a0a0a;letter-spacing:-0.23px;">Notes</span>
<div style="left:1216.8px;top:351.4px;width:26.9px;height:17.2px;background:#62c0e0;border-radius:2.500px"></div>
<span class="t" style="left:1221.95px;top:354.89px;font-size:10.3px;line-height:10.3px;color:#fff;letter-spacing:0.34px;">+/-</span>
<span class="t" style="left:1262.65px;top:336.35px;font-size:9.4px;line-height:9.4px;font-weight:700;color:#0a0a0a;letter-spacing:0.06px;">Sort</span>
<span class="t" style="left:1253.5px;top:354.85px;font-size:9.4px;line-height:9.4px;font-weight:700;color:#0a0a0a;letter-spacing:0.03px;">Rows</span>
<svg class="a" style="left:1281.9px;top:354.1px" width="13" height="13" viewBox="0 0 20 20"><circle cx="10" cy="10" r="9.3" fill="#1d5fae" stroke="#dfe9f8" stroke-width="1.2"/><path d="M6.9 7.6c0-1.9 1.4-3.1 3.2-3.1s3.2 1.1 3.2 2.8c0 2.3-2.5 2.4-2.5 4.6" fill="none" stroke="#fff" stroke-width="2.5" stroke-linecap="round"/><circle cx="10.7" cy="15.2" r="1.5" fill="#fff"/></svg>
<div style="left:1254px;top:368.6px;width:39.7px;height:24.6px;background:#3b7dbf;border-radius:3px"></div>
<span class="t" style="left:1263.05px;top:375.69px;font-size:10.3px;line-height:10.3px;color:#fff;letter-spacing:0.13px;">Sort</span>
<span class="t" style="left:1301.3px;top:336.35px;font-size:9.4px;line-height:9.4px;font-weight:700;color:#0a0a0a;letter-spacing:-0.17px;">Delete?</span>
<svg class="a" style="left:1314.8px;top:354.1px" width="13" height="13" viewBox="0 0 20 20"><circle cx="10" cy="10" r="9.3" fill="#1d5fae" stroke="#dfe9f8" stroke-width="1.2"/><path d="M6.9 7.6c0-1.9 1.4-3.1 3.2-3.1s3.2 1.1 3.2 2.8c0 2.3-2.5 2.4-2.5 4.6" fill="none" stroke="#fff" stroke-width="2.5" stroke-linecap="round"/><circle cx="10.7" cy="15.2" r="1.5" fill="#fff"/></svg>
<div style="left:723px;top:416.8px;width:335.5px;height:82.6px;background:#b9dfe9"></div>
<div style="left:723.6px;top:420.5px;width:22.7px;height:77.7px;border:1px solid;border-color:#c9e8ef #a9cdd7 #a9cdd7 #c9e8ef"></div>
<div style="left:746.6px;top:420.5px;width:310.6px;height:77.7px;border:1px solid;border-color:#c9e8ef #a9cdd7 #a9cdd7 #c9e8ef"></div>
<div style="left:8.2px;top:416.8px;width:1px;height:82.6px;background:#b0b0b0"></div>
<div style="left:64.7px;top:416.8px;width:1px;height:82.6px;background:#b0b0b0"></div>
<div style="left:181.2px;top:416.8px;width:1px;height:82.6px;background:#b0b0b0"></div>
<div style="left:225.5px;top:416.8px;width:1px;height:82.6px;background:#b0b0b0"></div>
<div style="left:358.5px;top:416.8px;width:1px;height:82.6px;background:#b0b0b0"></div>
<div style="left:400.2px;top:416.8px;width:1px;height:82.6px;background:#b0b0b0"></div>
<div style="left:459.5px;top:416.8px;width:1px;height:82.6px;background:#b0b0b0"></div>
<div style="left:522.1px;top:416.8px;width:1px;height:82.6px;background:#b0b0b0"></div>
<div style="left:611.7px;top:416.8px;width:1px;height:82.6px;background:#b0b0b0"></div>
<div style="left:671.5px;top:416.8px;width:1px;height:82.6px;background:#b0b0b0"></div>
<div style="left:722px;top:416.8px;width:1px;height:82.6px;background:#b0b0b0"></div>
<div style="left:1058.5px;top:416.8px;width:1px;height:82.6px;background:#b0b0b0"></div>
<div style="left:1134.8px;top:416.8px;width:1px;height:82.6px;background:#b0b0b0"></div>
<div style="left:1210.5px;top:416.8px;width:1px;height:82.6px;background:#b0b0b0"></div>
<div style="left:1248.9px;top:416.8px;width:1px;height:82.6px;background:#b0b0b0"></div>
<div style="left:1297.1px;top:416.8px;width:1px;height:82.6px;background:#b0b0b0"></div>
<div style="left:8.7px;top:416.3px;width:1332.1px;height:1px;background:#a9b8d2"></div>
<span class="t" style="left:11px;top:427.25px;font-size:9.4px;line-height:9.4px;color:#111;">East Tower</span>
<span class="t" style="left:68px;top:427.25px;font-size:9.4px;line-height:9.4px;color:#111;">9</span>
<svg class="a" style="left:192.9px;top:421.6px" width="20" height="20.6" viewBox="0 0 20 20.600"><defs><linearGradient id="eg" x1="0" y1="0" x2="0.150" y2="1"><stop offset="0" stop-color="#8c8c8c"/><stop offset="0.500" stop-color="#1a1a1a"/><stop offset="1" stop-color="#000"/></linearGradient></defs><rect x="0.400" y="1.100" width="19.200" height="19.400" rx="3.200" fill="#d2d2d2"/><rect x="0.400" y="0.300" width="19.200" height="19.200" rx="3.200" fill="#fdfdfd" stroke="#dedede" stroke-width="0.700"/><rect x="2.800" y="2.600" width="14.500" height="14.500" rx="0.600" fill="url(#eg)"/><path d="M6.200 14.300L15 5.200" stroke="#fff" stroke-width="2.300" stroke-linecap="round"/></svg>
<div style="left:228px;top:419.1px;width:129.2px;height:43.35px;background:#b9dfe9;border:1px solid #7c949d;border-radius:3px;box-shadow:0 0.500px 0.500px #8a9ea6"></div>
<span class="t" style="left:232.4px;top:426.49px;font-size:10.3px;line-height:10.3px;color:#1a1a1a;letter-spacing:0.04px;"> 9MN - David Boulware</span>
<span class="t" style="left:232.4px;top:445.24px;font-size:10.3px;line-height:10.3px;color:#1a1a1a;letter-spacing:0.07px;">&amp; Susan Veltfort</span>
<span class="t" style="left:427.08px;top:427.25px;font-size:9.4px;line-height:9.4px;font-weight:700;color:#f01414;">0</span>
<span class="t" style="left:488.32px;top:427.25px;font-size:9.4px;line-height:9.4px;color:#111;">0</span>
<span class="t" style="left:530.4px;top:427.25px;font-size:9.4px;line-height:9.4px;color:#111;letter-spacing:-0.04px;">Resident Apt 90</span>
<span class="t" style="left:636.13px;top:427.25px;font-size:9.4px;line-height:9.4px;color:#111;">90</span>
<span class="t" style="left:682.25px;top:427.25px;font-size:9.4px;line-height:9.4px;color:#111;letter-spacing:-0.02px;">‹‹ Min.</span>
<span class="t" style="left:676.75px;top:446px;font-size:9.4px;line-height:9.4px;color:#111;letter-spacing:0.06px;">Override</span>
<svg class="a" style="left:725px;top:422.3px" width="20.6" height="20.6" viewBox="0 0 20 20"><circle cx="10" cy="10" r="10" fill="#1b6fc3"/><path d="M4.200 14.200c1.300-3.700 3.800-5.400 7-5.600V6.200l4.800 4-4.800 4.100v-2.600c-2.800-.1-5 .7-7 2.500z" fill="#fff"/></svg>
<span class="t" style="left:748.4px;top:426.85px;font-size:9.4px;line-height:9.4px;color:#2c3e50;letter-spacing:0.27px;"><b>01/06</b><i>, </i><b>01/20</b><i>, </i><b>02/03</b><i>, </i><b>02/17</b><i>, </i><b>03/03</b><i>, </i><b>03/17</b><i>, </i><b>03/31</b><i>, </i><b>04/14</b><i>,</i></span>
<span class="t" style="left:748.4px;top:445.6px;font-size:9.4px;line-height:9.4px;color:#2c3e50;letter-spacing:0.27px;"><b>04/28</b><i>, </i><b>05/12</b><i>, </i><b>05/26</b><i>, </i><b>06/09</b><i>, </i><b>06/23</b><i>, </i><b>07/07</b><i>, </i><b>07/21</b><i>, </i><b>08/04</b><i>,</i></span>
<span class="t" style="left:748.4px;top:464.35px;font-size:9.4px;line-height:9.4px;color:#2c3e50;letter-spacing:0.27px;"><b>08/18</b><i>, </i><b>09/01</b><i>, </i><b>09/15</b><i>, </i><b>09/29</b><i>, </i><b>10/13</b><i>, </i><b>10/27</b><i>, </i><b>11/10</b><i>, </i><b>11/24</b><i>,</i></span>
<span class="t" style="left:748.4px;top:483.1px;font-size:9.4px;line-height:9.4px;color:#2c3e50;letter-spacing:0.27px;"><b>12/08</b><i>, </i><b>12/22</b></span>
<div style="left:1061.2px;top:424.6px;width:65.4px;height:13.8px;background:#fff;border:1px solid #b3b3b3;border-radius:2.500px"></div>
<span class="t" style="left:1065.1px;top:427.05px;font-size:9.4px;line-height:9.4px;color:#111;letter-spacing:0.24px;">9:00 AM</span>
<svg class="a" style="left:1114.4px;top:429.2px" width="8.5" height="5.2" viewBox="0 0 8.500 5.200"><path d="M0.600 0.700l3.650 3.700 3.650-3.700" fill="none" stroke="#222" stroke-width="1.200"/></svg>
<div style="left:1137.6px;top:424.6px;width:65.4px;height:13.8px;background:#fff;border:1px solid #b3b3b3;border-radius:2.500px"></div>
<span class="t" style="left:1141.5px;top:427.05px;font-size:9.4px;line-height:9.4px;color:#111;letter-spacing:0.29px;">10:30 AM</span>
<svg class="a" style="left:1190.8px;top:429.2px" width="8.5" height="5.2" viewBox="0 0 8.500 5.200"><path d="M0.600 0.700l3.650 3.700 3.650-3.700" fill="none" stroke="#222" stroke-width="1.200"/></svg>
<svg class="a" style="left:1215.2px;top:421.2px" width="22.7" height="23" viewBox="0 0 24 23.400"><path d="M1.800 0h20.400a1.800 1.800 0 0 1 1.800 1.800V15.600L16.200 23.400H1.800A1.800 1.800 0 0 1 0 21.600V1.800A1.800 1.800 0 0 1 1.800 0z" fill="#fcc232"/><path d="M1.800 0h20.400a1.800 1.800 0 0 1 1.800 1.800V3.800H0V1.800A1.800 1.800 0 0 1 1.800 0z" fill="#f7a928"/><path d="M24 15.600L16.200 23.400V17a1.400 1.400 0 0 1 1.400-1.400z" fill="#f39a1f"/><path d="M4.300 8.200h15.400M4.300 11.900h15.400M4.300 15.600h8.700" stroke="#f5ab2c" stroke-width="1.500"/></svg>
<div style="left:1252px;top:421.2px;width:38.4px;height:21px;background:#fff;border:1px solid #d9eef5;border-radius:2px"></div>
<span class="t" style="left:1265.23px;top:427.05px;font-size:9.4px;line-height:9.4px;color:#111;">19</span>
<svg class="a" style="left:1310.2px;top:422.2px" width="20.4" height="21.4" viewBox="0 0 22 23"><defs><linearGradient id="dg" x1="0" y1="0" x2="0" y2="1"><stop offset="0" stop-color="#d8283c"/><stop offset="1" stop-color="#a80f20"/></linearGradient></defs><circle cx="11" cy="12.100" r="10.400" fill="#c9c9c9" opacity="0.800"/><circle cx="11" cy="11" r="10.400" fill="#e3e3e3"/><circle cx="11" cy="11" r="9.700" fill="#fafafa"/><circle cx="11" cy="11" r="8.700" fill="url(#dg)"/><path d="M7.400 7.400l7.200 7.200M14.600 7.400l-7.200 7.200" stroke="#fff" stroke-width="2.700" stroke-linecap="round"/></svg>
<div style="left:1314.8px;top:448.3px;width:11.2px;height:10.9px;background:#fff;border:1px solid #8c8c8c;border-radius:2.500px"></div>
<div style="left:8.7px;top:499.4px;width:713.8px;height:50px;background:#cccccc"></div>
<div style="left:723px;top:499.4px;width:335.5px;height:50px;background:#b9dfe9"></div>
<div style="left:723.6px;top:503.1px;width:22.7px;height:45.1px;border:1px solid;border-color:#c9e8ef #a9cdd7 #a9cdd7 #c9e8ef"></div>
<div style="left:746.6px;top:503.1px;width:310.6px;height:45.1px;border:1px solid;border-color:#c9e8ef #a9cdd7 #a9cdd7 #c9e8ef"></div>
<div style="left:8.2px;top:499.4px;width:1px;height:50px;background:#b0b0b0"></div>
<div style="left:64.7px;top:499.4px;width:1px;height:50px;background:#b0b0b0"></div>
<div style="left:181.2px;top:499.4px;width:1px;height:50px;background:#b0b0b0"></div>
<div style="left:225.5px;top:499.4px;width:1px;height:50px;background:#b0b0b0"></div>
<div style="left:358.5px;top:499.4px;width:1px;height:50px;background:#b0b0b0"></div>
<div style="left:400.2px;top:499.4px;width:1px;height:50px;background:#b0b0b0"></div>
<div style="left:459.5px;top:499.4px;width:1px;height:50px;background:#b0b0b0"></div>
<div style="left:522.1px;top:499.4px;width:1px;height:50px;background:#b0b0b0"></div>
<div style="left:611.7px;top:499.4px;width:1px;height:50px;background:#b0b0b0"></div>
<div style="left:671.5px;top:499.4px;width:1px;height:50px;background:#b0b0b0"></div>
<div style="left:722px;top:499.4px;width:1px;height:50px;background:#b0b0b0"></div>
<div style="left:1058.5px;top:499.4px;width:1px;height:50px;background:#b0b0b0"></div>
<div style="left:1134.8px;top:499.4px;width:1px;height:50px;background:#b0b0b0"></div>
<div style="left:1210.5px;top:499.4px;width:1px;height:50px;background:#b0b0b0"></div>
<div style="left:1248.9px;top:499.4px;width:1px;height:50px;background:#b0b0b0"></div>
<div style="left:1297.1px;top:499.4px;width:1px;height:50px;background:#b0b0b0"></div>
<div style="left:8.7px;top:498.9px;width:1332.1px;height:1px;background:#b0b0b0"></div>
<span class="t" style="left:11px;top:509.85px;font-size:9.4px;line-height:9.4px;color:#111;">North</span>
<span class="t" style="left:11px;top:528.6px;font-size:9.4px;line-height:9.4px;color:#111;">Tower</span>
<span class="t" style="left:68px;top:509.85px;font-size:9.4px;line-height:9.4px;color:#111;">12</span>
<svg class="a" style="left:192.9px;top:504.2px" width="20" height="20.6" viewBox="0 0 20 20.600"><defs><linearGradient id="eg" x1="0" y1="0" x2="0.150" y2="1"><stop offset="0" stop-color="#8c8c8c"/><stop offset="0.500" stop-color="#1a1a1a"/><stop offset="1" stop-color="#000"/></linearGradient></defs><rect x="0.400" y="1.100" width="19.200" height="19.400" rx="3.200" fill="#d2d2d2"/><rect x="0.400" y="0.300" width="19.200" height="19.200" rx="3.200" fill="#fdfdfd" stroke="#dedede" stroke-width="0.700"/><rect x="2.800" y="2.600" width="14.500" height="14.500" rx="0.600" fill="url(#eg)"/><path d="M6.200 14.300L15 5.200" stroke="#fff" stroke-width="2.300" stroke-linecap="round"/></svg>
<div style="left:228px;top:501.7px;width:129.2px;height:24.6px;background:#b9dfe9;border:1px solid #7c949d;border-radius:3px;box-shadow:0 0.500px 0.500px #8a9ea6"></div>
<span class="t" style="left:232.4px;top:509.09px;font-size:10.3px;line-height:10.3px;color:#1a1a1a;letter-spacing:0.03px;"> 1205 - Barbara Garlid</span>
<span class="t" style="left:427.08px;top:509.85px;font-size:9.4px;line-height:9.4px;font-weight:700;color:#f01414;">0</span>
<span class="t" style="left:488.32px;top:509.85px;font-size:9.4px;line-height:9.4px;color:#111;">0</span>
<span class="t" style="left:530.4px;top:509.85px;font-size:9.4px;line-height:9.4px;color:#111;letter-spacing:-0.04px;">Resident Apt 60</span>
<span class="t" style="left:636.13px;top:509.85px;font-size:9.4px;line-height:9.4px;color:#111;">60</span>
<span class="t" style="left:682.25px;top:509.85px;font-size:9.4px;line-height:9.4px;color:#111;letter-spacing:-0.02px;">‹‹ Min.</span>
<span class="t" style="left:676.75px;top:528.6px;font-size:9.4px;line-height:9.4px;color:#111;letter-spacing:0.06px;">Override</span>
<svg class="a" style="left:725px;top:504.9px" width="20.6" height="20.6" viewBox="0 0 20 20"><circle cx="10" cy="10" r="10" fill="#1b6fc3"/><path d="M4.200 14.200c1.300-3.700 3.800-5.400 7-5.600V6.200l4.800 4-4.800 4.100v-2.600c-2.800-.1-5 .7-7 2.500z" fill="#fff"/></svg>
<span class="t" style="left:748.4px;top:509.45px;font-size:9.4px;line-height:9.4px;color:#2c3e50;letter-spacing:0.27px;"><b>01/08</b><i>, </i><b>02/12</b><i>, </i><b>03/12</b><i>, </i><b>04/09</b><i>, </i><b>05/14</b><i>, </i><b>06/11</b><i>, </i><b>07/09</b><i>, </i><b>08/13</b><i>,</i></span>
<span class="t" style="left:748.4px;top:528.2px;font-size:9.4px;line-height:9.4px;color:#2c3e50;letter-spacing:0.27px;"><b>09/10</b><i>, </i><b>10/08</b><i>, </i><b>11/12</b><i>, </i><b>12/10</b></span>
<div style="left:1061.2px;top:507.2px;width:65.4px;height:13.8px;background:#fff;border:1px solid #b3b3b3;border-radius:2.500px"></div>
<span class="t" style="left:1065.1px;top:509.65px;font-size:9.4px;line-height:9.4px;color:#111;letter-spacing:0.2px;">3:30 PM</span>
<svg class="a" style="left:1114.4px;top:511.8px" width="8.5" height="5.2" viewBox="0 0 8.500 5.200"><path d="M0.600 0.700l3.650 3.700 3.650-3.700" fill="none" stroke="#222" stroke-width="1.200"/></svg>
<div style="left:1137.6px;top:507.2px;width:65.4px;height:13.8px;background:#fff;border:1px solid #b3b3b3;border-radius:2.500px"></div>
<span class="t" style="left:1141.5px;top:509.65px;font-size:9.4px;line-height:9.4px;color:#111;letter-spacing:0.2px;">4:30 PM</span>
<svg class="a" style="left:1190.8px;top:511.8px" width="8.5" height="5.2" viewBox="0 0 8.500 5.200"><path d="M0.600 0.700l3.650 3.700 3.650-3.700" fill="none" stroke="#222" stroke-width="1.200"/></svg>
<svg class="a" style="left:1215.2px;top:503.8px" width="22.7" height="23" viewBox="0 0 24 23.400"><path d="M1.800 0h20.400a1.800 1.800 0 0 1 1.800 1.800V15.600L16.200 23.400H1.800A1.800 1.800 0 0 1 0 21.600V1.800A1.800 1.800 0 0 1 1.800 0z" fill="#fcc232"/><path d="M1.800 0h20.400a1.800 1.800 0 0 1 1.800 1.800V3.800H0V1.800A1.800 1.800 0 0 1 1.800 0z" fill="#f7a928"/><path d="M24 15.600L16.200 23.400V17a1.400 1.400 0 0 1 1.400-1.400z" fill="#f39a1f"/><path d="M4.300 8.200h15.400M4.300 11.900h15.400M4.300 15.600h8.700" stroke="#f5ab2c" stroke-width="1.500"/></svg>
<div style="left:1252px;top:503.8px;width:38.4px;height:21px;background:#fff;border:1px solid #d9eef5;border-radius:2px"></div>
<span class="t" style="left:1265.23px;top:509.65px;font-size:9.4px;line-height:9.4px;color:#111;">20</span>
<svg class="a" style="left:1310.2px;top:504.8px" width="20.4" height="21.4" viewBox="0 0 22 23"><defs><linearGradient id="dg" x1="0" y1="0" x2="0" y2="1"><stop offset="0" stop-color="#d8283c"/><stop offset="1" stop-color="#a80f20"/></linearGradient></defs><circle cx="11" cy="12.100" r="10.400" fill="#c9c9c9" opacity="0.800"/><circle cx="11" cy="11" r="10.400" fill="#e3e3e3"/><circle cx="11" cy="11" r="9.700" fill="#fafafa"/><circle cx="11" cy="11" r="8.700" fill="url(#dg)"/><path d="M7.400 7.400l7.200 7.200M14.600 7.400l-7.200 7.200" stroke="#fff" stroke-width="2.700" stroke-linecap="round"/></svg>
<div style="left:1314.8px;top:530.9px;width:11.2px;height:10.9px;background:#fff;border:1px solid #8c8c8c;border-radius:2.500px"></div>
<div style="left:723px;top:549.4px;width:335.5px;height:82.9px;background:#b9dfe9"></div>
<div style="left:723.6px;top:553.1px;width:22.7px;height:78px;border:1px solid;border-color:#c9e8ef #a9cdd7 #a9cdd7 #c9e8ef"></div>
<div style="left:746.6px;top:553.1px;width:310.6px;height:78px;border:1px solid;border-color:#c9e8ef #a9cdd7 #a9cdd7 #c9e8ef"></div>
<div style="left:8.2px;top:549.4px;width:1px;height:82.9px;background:#b0b0b0"></div>
<div style="left:64.7px;top:549.4px;width:1px;height:82.9px;background:#b0b0b0"></div>
<div style="left:181.2px;top:549.4px;width:1px;height:82.9px;background:#b0b0b0"></div>
<div style="left:225.5px;top:549.4px;width:1px;height:82.9px;background:#b0b0b0"></div>
<div style="left:358.5px;top:549.4px;width:1px;height:82.9px;background:#b0b0b0"></div>
<div style="left:400.2px;top:549.4px;width:1px;height:82.9px;background:#b0b0b0"></div>
<div style="left:459.5px;top:549.4px;width:1px;height:82.9px;background:#b0b0b0"></div>
<div style="left:522.1px;top:549.4px;width:1px;height:82.9px;background:#b0b0b0"></div>
<div style="left:611.7px;top:549.4px;width:1px;height:82.9px;background:#b0b0b0"></div>
<div style="left:671.5px;top:549.4px;width:1px;height:82.9px;background:#b0b0b0"></div>
<div style="left:722px;top:549.4px;width:1px;height:82.9px;background:#b0b0b0"></div>
<div style="left:1058.5px;top:549.4px;width:1px;height:82.9px;background:#b0b0b0"></div>
<div style="left:1134.8px;top:549.4px;width:1px;height:82.9px;background:#b0b0b0"></div>
<div style="left:1210.5px;top:549.4px;width:1px;height:82.9px;background:#b0b0b0"></div>
<div style="left:1248.9px;top:549.4px;width:1px;height:82.9px;background:#b0b0b0"></div>
<div style="left:1297.1px;top:549.4px;width:1px;height:82.9px;background:#b0b0b0"></div>
<div style="left:8.7px;top:548.9px;width:1332.1px;height:1px;background:#b0b0b0"></div>
<span class="t" style="left:11px;top:559.85px;font-size:9.4px;line-height:9.4px;color:#111;">Central</span>
<span class="t" style="left:11px;top:578.6px;font-size:9.4px;line-height:9.4px;color:#111;">Tower</span>
<span class="t" style="left:68px;top:559.85px;font-size:9.4px;line-height:9.4px;color:#111;">12</span>
<svg class="a" style="left:192.9px;top:554.2px" width="20" height="20.6" viewBox="0 0 20 20.600"><defs><linearGradient id="eg" x1="0" y1="0" x2="0.150" y2="1"><stop offset="0" stop-color="#8c8c8c"/><stop offset="0.500" stop-color="#1a1a1a"/><stop offset="1" stop-color="#000"/></linearGradient></defs><rect x="0.400" y="1.100" width="19.200" height="19.400" rx="3.200" fill="#d2d2d2"/><rect x="0.400" y="0.300" width="19.200" height="19.200" rx="3.200" fill="#fdfdfd" stroke="#dedede" stroke-width="0.700"/><rect x="2.800" y="2.600" width="14.500" height="14.500" rx="0.600" fill="url(#eg)"/><path d="M6.200 14.300L15 5.200" stroke="#fff" stroke-width="2.300" stroke-linecap="round"/></svg>
<div style="left:228px;top:551.7px;width:129.2px;height:43.35px;background:#b9dfe9;border:1px solid #7c949d;border-radius:3px;box-shadow:0 0.500px 0.500px #8a9ea6"></div>
<span class="t" style="left:232.4px;top:559.09px;font-size:10.3px;line-height:10.3px;color:#1a1a1a;letter-spacing:0.31px;"> 12E - Frank Van</span>
<span class="t" style="left:232.4px;top:577.84px;font-size:10.3px;line-height:10.3px;color:#1a1a1a;letter-spacing:-0.05px;">Dusen</span>
<span class="t" style="left:427.08px;top:559.85px;font-size:9.4px;line-height:9.4px;font-weight:700;color:#f01414;">0</span>
<span class="t" style="left:488.32px;top:559.85px;font-size:9.4px;line-height:9.4px;color:#111;">0</span>
<span class="t" style="left:527.15px;top:559.85px;font-size:9.4px;line-height:9.4px;color:#111;letter-spacing:-0.01px;">Resident Apt 120</span>
<span class="t" style="left:633.15px;top:559.85px;font-size:9.4px;line-height:9.4px;color:#111;">120</span>
<span class="t" style="left:682.25px;top:559.85px;font-size:9.4px;line-height:9.4px;color:#111;letter-spacing:-0.02px;">‹‹ Min.</span>
<span class="t" style="left:676.75px;top:578.6px;font-size:9.4px;line-height:9.4px;color:#111;letter-spacing:0.06px;">Override</span>
<svg class="a" style="left:725px;top:554.9px" width="20.6" height="20.6" viewBox="0 0 20 20"><circle cx="10" cy="10" r="10" fill="#1b6fc3"/><path d="M4.200 14.200c1.300-3.700 3.800-5.400 7-5.600V6.200l4.800 4-4.800 4.100v-2.600c-2.800-.1-5 .7-7 2.500z" fill="#fff"/></svg>
<span class="t" style="left:748.4px;top:559.45px;font-size:9.4px;line-height:9.4px;color:#2c3e50;letter-spacing:0.27px;"><b>01/06</b><i>, </i><b>01/20</b><i>, </i><b>02/03</b><i>, </i><b>02/17</b><i>, </i><b>03/03</b><i>, </i><b>03/17</b><i>, </i><b>03/31</b><i>, </i><b>04/14</b><i>,</i></span>
<span class="t" style="left:748.4px;top:578.2px;font-size:9.4px;line-height:9.4px;color:#2c3e50;letter-spacing:0.27px;"><b>04/28</b><i>, </i><b>05/12</b><i>, </i><b>05/26</b><i>, </i><b>06/09</b><i>, </i><b>06/23</b><i>, </i><b>07/07</b><i>, </i><b>07/21</b><i>, </i><b>08/04</b><i>,</i></span>
<span class="t" style="left:748.4px;top:596.95px;font-size:9.4px;line-height:9.4px;color:#2c3e50;letter-spacing:0.27px;"><b>08/18</b><i>, </i><b>09/01</b><i>, </i><b>09/15</b><i>, </i><b>09/29</b><i>, </i><b>10/13</b><i>, </i><b>10/27</b><i>, </i><b>11/10</b><i>, </i><b>11/24</b><i>,</i></span>
<span class="t" style="left:748.4px;top:615.7px;font-size:9.4px;line-height:9.4px;color:#2c3e50;letter-spacing:0.27px;"><b>12/08</b><i>, </i><b>12/22</b></span>
<div style="left:1061.2px;top:557.2px;width:65.4px;height:13.8px;background:#fff;border:1px solid #b3b3b3;border-radius:2.500px"></div>
<span class="t" style="left:1065.1px;top:559.65px;font-size:9.4px;line-height:9.4px;color:#111;letter-spacing:0.29px;">11:00 AM</span>
<svg class="a" style="left:1114.4px;top:561.8px" width="8.5" height="5.2" viewBox="0 0 8.500 5.200"><path d="M0.600 0.700l3.650 3.700 3.650-3.700" fill="none" stroke="#222" stroke-width="1.200"/></svg>
<div style="left:1137.6px;top:557.2px;width:65.4px;height:13.8px;background:#fff;border:1px solid #b3b3b3;border-radius:2.500px"></div>
<span class="t" style="left:1141.5px;top:559.65px;font-size:9.4px;line-height:9.4px;color:#111;letter-spacing:0.2px;">1:00 PM</span>
<svg class="a" style="left:1190.8px;top:561.8px" width="8.5" height="5.2" viewBox="0 0 8.500 5.200"><path d="M0.600 0.700l3.650 3.700 3.650-3.700" fill="none" stroke="#222" stroke-width="1.200"/></svg>
<svg class="a" style="left:1215.2px;top:553.8px" width="22.7" height="23" viewBox="0 0 24 23.400"><path d="M1.800 0h20.400a1.800 1.800 0 0 1 1.800 1.800V15.600L16.200 23.400H1.800A1.800 1.800 0 0 1 0 21.600V1.800A1.800 1.800 0 0 1 1.800 0z" fill="#fcc232"/><path d="M1.800 0h20.400a1.800 1.800 0 0 1 1.800 1.800V3.800H0V1.800A1.800 1.800 0 0 1 1.800 0z" fill="#f7a928"/><path d="M24 15.600L16.200 23.400V17a1.400 1.400 0 0 1 1.400-1.400z" fill="#f39a1f"/><path d="M4.300 8.200h15.400M4.300 11.900h15.400M4.300 15.600h8.700" stroke="#f5ab2c" stroke-width="1.500"/></svg>
<div style="left:1252px;top:553.8px;width:38.4px;height:21px;background:#fff;border:1px solid #d9eef5;border-radius:2px"></div>
<span class="t" style="left:1265.23px;top:559.65px;font-size:9.4px;line-height:9.4px;color:#111;">23</span>
<svg class="a" style="left:1310.2px;top:554.8px" width="20.4" height="21.4" viewBox="0 0 22 23"><defs><linearGradient id="dg" x1="0" y1="0" x2="0" y2="1"><stop offset="0" stop-color="#d8283c"/><stop offset="1" stop-color="#a80f20"/></linearGradient></defs><circle cx="11" cy="12.100" r="10.400" fill="#c9c9c9" opacity="0.800"/><circle cx="11" cy="11" r="10.400" fill="#e3e3e3"/><circle cx="11" cy="11" r="9.700" fill="#fafafa"/><circle cx="11" cy="11" r="8.700" fill="url(#dg)"/><path d="M7.400 7.400l7.200 7.200M14.600 7.400l-7.200 7.200" stroke="#fff" stroke-width="2.700" stroke-linecap="round"/></svg>
<div style="left:1314.8px;top:580.9px;width:11.2px;height:10.9px;background:#fff;border:1px solid #8c8c8c;border-radius:2.500px"></div>
<div style="left:8.7px;top:632.3px;width:713.8px;height:67.7px;background:#cccccc"></div>
<div style="left:723px;top:632.3px;width:335.5px;height:67.7px;background:#b9dfe9"></div>
<div style="left:723.6px;top:636px;width:22.7px;height:62.8px;border:1px solid;border-color:#c9e8ef #a9cdd7 #a9cdd7 #c9e8ef"></div>
<div style="left:746.6px;top:636px;width:310.6px;height:62.8px;border:1px solid;border-color:#c9e8ef #a9cdd7 #a9cdd7 #c9e8ef"></div>
<div style="left:8.2px;top:632.3px;width:1px;height:67.7px;background:#b0b0b0"></div>
<div style="left:64.7px;top:632.3px;width:1px;height:67.7px;background:#b0b0b0"></div>
<div style="left:181.2px;top:632.3px;width:1px;height:67.7px;background:#b0b0b0"></div>
<div style="left:225.5px;top:632.3px;width:1px;height:67.7px;background:#b0b0b0"></div>
<div style="left:358.5px;top:632.3px;width:1px;height:67.7px;background:#b0b0b0"></div>
<div style="left:400.2px;top:632.3px;width:1px;height:67.7px;background:#b0b0b0"></div>
<div style="left:459.5px;top:632.3px;width:1px;height:67.7px;background:#b0b0b0"></div>
<div style="left:522.1px;top:632.3px;width:1px;height:67.7px;background:#b0b0b0"></div>
<div style="left:611.7px;top:632.3px;width:1px;height:67.7px;background:#b0b0b0"></div>
<div style="left:671.5px;top:632.3px;width:1px;height:67.7px;background:#b0b0b0"></div>
<div style="left:722px;top:632.3px;width:1px;height:67.7px;background:#b0b0b0"></div>
<div style="left:1058.5px;top:632.3px;width:1px;height:67.7px;background:#b0b0b0"></div>
<div style="left:1134.8px;top:632.3px;width:1px;height:67.7px;background:#b0b0b0"></div>
<div style="left:1210.5px;top:632.3px;width:1px;height:67.7px;background:#b0b0b0"></div>
<div style="left:1248.9px;top:632.3px;width:1px;height:67.7px;background:#b0b0b0"></div>
<div style="left:1297.1px;top:632.3px;width:1px;height:67.7px;background:#b0b0b0"></div>
<div style="left:8.7px;top:631.8px;width:1332.1px;height:1px;background:#b0b0b0"></div>
<span class="t" style="left:68px;top:642.75px;font-size:9.4px;line-height:9.4px;color:#111;"></span>
<svg class="a" style="left:192.9px;top:637.1px" width="20" height="20.6" viewBox="0 0 20 20.600"><defs><linearGradient id="eg" x1="0" y1="0" x2="0.150" y2="1"><stop offset="0" stop-color="#8c8c8c"/><stop offset="0.500" stop-color="#1a1a1a"/><stop offset="1" stop-color="#000"/></linearGradient></defs><rect x="0.400" y="1.100" width="19.200" height="19.400" rx="3.200" fill="#d2d2d2"/><rect x="0.400" y="0.300" width="19.200" height="19.200" rx="3.200" fill="#fdfdfd" stroke="#dedede" stroke-width="0.700"/><rect x="2.800" y="2.600" width="14.500" height="14.500" rx="0.600" fill="url(#eg)"/><path d="M6.200 14.300L15 5.200" stroke="#fff" stroke-width="2.300" stroke-linecap="round"/></svg>
<div style="left:228px;top:634.6px;width:129.2px;height:24.6px;background:#b9dfe9;border:1px solid #7c949d;border-radius:3px;box-shadow:0 0.500px 0.500px #8a9ea6"></div>
<span class="t" style="left:232.4px;top:641.99px;font-size:10.3px;line-height:10.3px;color:#1a1a1a;"></span>
<svg class="a" style="left:725px;top:637.8px" width="20.6" height="20.6" viewBox="0 0 20 20"><circle cx="10" cy="10" r="10" fill="#1b6fc3"/><path d="M4.200 14.200c1.300-3.700 3.800-5.400 7-5.600V6.200l4.800 4-4.800 4.100v-2.600c-2.800-.1-5 .7-7 2.500z" fill="#fff"/></svg>
<div style="left:1061.2px;top:639.3px;width:65.4px;height:14px;background:#fff;border:1px solid #b3b3b3;border-radius:2.500px"></div>
<div style="left:1137.6px;top:639.3px;width:65.4px;height:14px;background:#fff;border:1px solid #b3b3b3;border-radius:2.500px"></div>
<svg class="a" style="left:1215.2px;top:636.7px" width="22.7" height="23" viewBox="0 0 24 23.400"><path d="M1.800 0h20.400a1.800 1.800 0 0 1 1.800 1.800V15.600L16.200 23.400H1.800A1.800 1.800 0 0 1 0 21.600V1.800A1.800 1.800 0 0 1 1.800 0z" fill="#fcc232"/><path d="M1.800 0h20.400a1.800 1.800 0 0 1 1.800 1.800V3.800H0V1.800A1.800 1.800 0 0 1 1.800 0z" fill="#f7a928"/><path d="M24 15.600L16.200 23.400V17a1.400 1.400 0 0 1 1.400-1.400z" fill="#f39a1f"/><path d="M4.300 8.200h15.400M4.300 11.900h15.400M4.300 15.600h8.700" stroke="#f5ab2c" stroke-width="1.500"/></svg>
<div style="left:1252px;top:636.7px;width:38.4px;height:21px;background:#fff;border:1px solid #d9eef5;border-radius:2px"></div>
<svg class="a" style="left:1310.2px;top:637.7px" width="20.4" height="21.4" viewBox="0 0 22 23"><defs><linearGradient id="dg" x1="0" y1="0" x2="0" y2="1"><stop offset="0" stop-color="#d8283c"/><stop offset="1" stop-color="#a80f20"/></linearGradient></defs><circle cx="11" cy="12.100" r="10.400" fill="#c9c9c9" opacity="0.800"/><circle cx="11" cy="11" r="10.400" fill="#e3e3e3"/><circle cx="11" cy="11" r="9.700" fill="#fafafa"/><circle cx="11" cy="11" r="8.700" fill="url(#dg)"/><path d="M7.400 7.400l7.200 7.200M14.600 7.400l-7.200 7.200" stroke="#fff" stroke-width="2.700" stroke-linecap="round"/></svg>
</body>
</html>
